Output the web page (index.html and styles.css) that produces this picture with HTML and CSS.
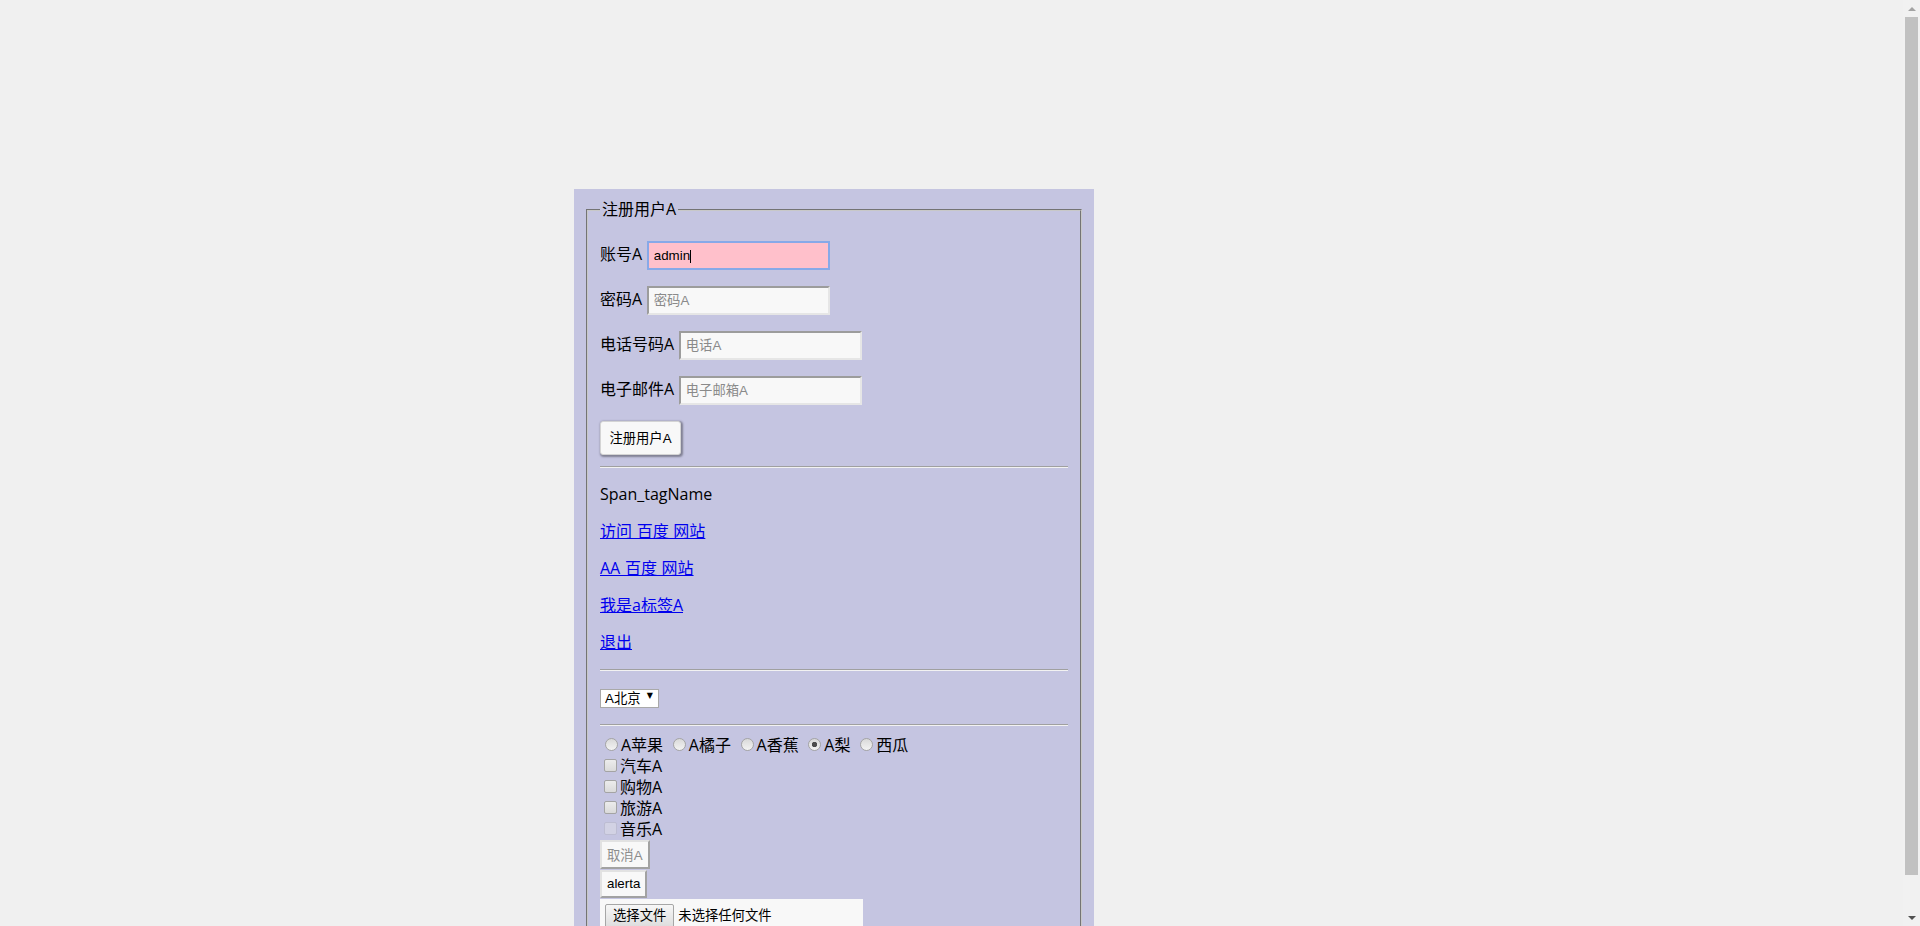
FILE: index.html
```html
<!DOCTYPE html>
<html lang="zh-CN">
<head>
<meta charset="utf-8">
<title>注册用户A</title>
<link rel="stylesheet" href="styles.css">
</head>
<body>
<div class="panel">
  <form class="reg-form" action="#" onsubmit="return false">
    <fieldset class="reg">
      <legend class="reg-title">注册用户A</legend>
      <p class="row">账号A <span class="field"><input class="txt txt-focus" type="text" value="admin"><i class="caret"></i></span></p>
      <p class="row">密码A <input class="txt" type="password" placeholder="密码A"></p>
      <p class="row">电话号码A <input class="txt" type="text" placeholder="电话A"></p>
      <p class="row">电子邮件A <input class="txt" type="text" placeholder="电子邮箱A"></p>
      <button class="btn-submit" type="button">注册用户A</button>
      <hr class="rule">
      <p class="line"><span>Span_tagName</span></p>
      <p class="line"><a class="link" href="#">访问 百度 网站</a></p>
      <p class="line"><a class="link" href="#">AA 百度 网站</a></p>
      <p class="line"><a class="link" href="#">我是a标签A</a></p>
      <p class="line"><a class="link" href="#">退出</a></p>
      <hr class="rule">
      <p class="line"><span class="select-wrap"><select class="city"><option>A北京</option><option>A上海</option><option>A广州</option></select></span></p>
      <hr class="rule">
      <div class="radios"><input class="opt-radio" type="radio" name="fruit">A苹果 <input class="opt-radio" type="radio" name="fruit">A橘子 <input class="opt-radio" type="radio" name="fruit">A香蕉 <input class="opt-radio" type="radio" name="fruit" checked>A梨 <input class="opt-radio" type="radio" name="fruit">西瓜</div>
      <label class="chk-line"><input class="opt-check" type="checkbox">汽车A</label>
      <label class="chk-line"><input class="opt-check" type="checkbox">购物A</label>
      <label class="chk-line"><input class="opt-check" type="checkbox">旅游A</label>
      <label class="chk-line"><input class="opt-check" type="checkbox" disabled>音乐A</label>
      <button class="btn-plain btn-cancel" type="button" disabled>取消A</button>
      <button class="btn-plain btn-alert" type="button">alerta</button>
      <label class="file"><span class="file-btn">选择文件</span><span class="file-name">未选择任何文件</span><input class="file-input" type="file"></label>
    </fieldset>
  </form>
</div>
<div class="scrollbar" aria-hidden="true">
  <span class="sb-btn sb-up"></span>
  <span class="sb-track"><span class="sb-thumb"></span></span>
  <span class="sb-btn sb-down"></span>
</div>
</body>
</html>
```

FILE: styles.css
```css
html {
  background: #f0f0f0;
}

body {
  margin: 0;
  font-family: "Open Sans", "Noto Sans CJK SC", sans-serif;
  font-size: 16px;
  line-height: 21px;
  word-spacing: 0.5px;
  color: #000;
}

.panel {
  width: 500px;
  margin: 189px 0 8px 574px;
  padding: 10px;
  background: #c5c5e1;
}

.reg-form {
  margin: 0;
}

.reg {
  margin: 0 2px;
  padding: 4.6px 12px 10px;
  border: 2px groove #c8c8c8;
  min-width: 0;
}

.reg-title {
  padding: 0 2px;
  line-height: 21px;
}

.row {
  margin: 16px 0;
}

.field {
  position: relative;
  display: inline-block;
}

.txt {
  box-sizing: border-box;
  width: 183px;
  height: 29px;
  margin: 0;
  padding: 0 5px;
  border: 2px solid;
  border-color: #9c9c9c #e6e6e6 #e6e6e6 #9c9c9c;
  background: #f8f8f8;
  font: 13.33px "Liberation Sans", "Noto Sans CJK SC", sans-serif;
  word-spacing: 0;
  color: #000;
  outline: none;
  vertical-align: baseline;
}

.txt::placeholder {
  color: #8a8a8a;
}

.txt-focus {
  background: #ffc0cb;
  border-color: #87a9e8;
}

.caret {
  position: absolute;
  left: 43px;
  top: 9px;
  width: 1px;
  height: 13px;
  background: #000;
}

.btn-submit {
  display: block;
  box-sizing: border-box;
  width: 81px;
  height: 34px;
  margin: 0 0 11px;
  padding: 0;
  border: 1px solid #d4d4d4;
  border-radius: 3px;
  background: #f8f8f8;
  box-shadow: 1px 1px 2px 1px rgba(0, 0, 0, 0.35);
  font: 13.33px "Liberation Sans", "Noto Sans CJK SC", sans-serif;
  color: #000;
}

.rule {
  height: 0;
  margin: 8px 0;
  border: 0;
  border-top: 1px solid #a0a0a0;
  border-bottom: 1px solid #f2f2f2;
}

.line {
  margin: 16px 0;
}

.link {
  color: #0000ee;
  text-decoration: underline;
}

.select-wrap {
  position: relative;
  display: inline-block;
}

.city {
  -webkit-appearance: none;
  appearance: none;
  box-sizing: border-box;
  width: 59px;
  height: 19px;
  margin: 0;
  padding: 0 0 0 4px;
  border: 1px solid #a9a9a9;
  border-radius: 0;
  background: #fff;
  font: 13.33px "Liberation Sans", "Noto Sans CJK SC", sans-serif;
  color: #000;
}

.select-wrap::after {
  content: "▼";
  position: absolute;
  right: 6px;
  top: 5px;
  font: 8px/8px "DejaVu Sans", sans-serif;
  color: #000;
  pointer-events: none;
}

.radios {
  padding-top: 1px;
  line-height: 21px;
}

.opt-radio {
  -webkit-appearance: none;
  appearance: none;
  box-sizing: border-box;
  width: 13px;
  height: 13px;
  margin: 0 3px 0 5px;
  border: 1px solid #a4a4a4;
  border-radius: 50%;
  background: linear-gradient(#d9d9d9, #f3f3f3);
  vertical-align: baseline;
}

.opt-radio:checked {
  background: radial-gradient(circle, #4d4d4d 0 2.4px, transparent 3px), linear-gradient(#d9d9d9, #f3f3f3);
}

.chk-line {
  display: block;
}

.opt-check {
  -webkit-appearance: none;
  appearance: none;
  box-sizing: border-box;
  width: 13px;
  height: 13px;
  margin: 0 3px 0 4px;
  border: 1px solid #a4a4a4;
  border-radius: 2px;
  background: linear-gradient(#ececec, #dadada);
  vertical-align: 0;
}

.opt-check:disabled {
  border-color: #bdbdd2;
  background: #d2d2e4;
}

.btn-plain {
  display: block;
  box-sizing: border-box;
  height: 29px;
  margin: 0 0 1px;
  padding: 0 5px;
  border: 2px solid;
  border-color: #e2e2e2 #a2a2a2 #a2a2a2 #e2e2e2;
  border-radius: 0;
  background: #f8f8f8;
  font: 13.33px "Liberation Sans", "Noto Sans CJK SC", sans-serif;
  color: #000;
}

.btn-cancel {
  color: #8d8d8d;
}

.btn-alert {
  height: 28px;
}

.file {
  display: flex;
  align-items: center;
  gap: 4px;
  box-sizing: border-box;
  width: 263px;
  height: 34px;
  padding: 0 5px;
  background: #f8f8f8;
  font: 13.33px "Liberation Sans", "Noto Sans CJK SC", sans-serif;
  line-height: 16px;
  word-spacing: 0;
}

.file-btn {
  display: flex;
  align-items: center;
  box-sizing: border-box;
  height: 24px;
  padding: 0 7px;
  border: 1px solid #a6a6a6;
  border-radius: 2px;
  background: linear-gradient(#f7f7f7, #dddddd);
}

.file-input {
  display: none;
}

/* classic browser scrollbar drawn over the right edge of the window */
.scrollbar {
  position: fixed;
  top: 0;
  right: 0;
  display: flex;
  flex-direction: column;
  width: 17px;
  height: 100vh;
  background: #f1f1f1;
}

.sb-btn {
  display: flex;
  align-items: center;
  justify-content: center;
  flex: 0 0 17px;
}

.sb-up::before {
  content: "";
  width: 0;
  height: 0;
  border-left: 4px solid transparent;
  border-right: 4px solid transparent;
  border-bottom: 4px solid #a3a3a3;
}

.sb-down::before {
  content: "";
  width: 0;
  height: 0;
  border-left: 4px solid transparent;
  border-right: 4px solid transparent;
  border-top: 4px solid #505050;
}

.sb-track {
  flex: 1;
  padding: 0 2px;
}

.sb-thumb {
  display: block;
  height: 858px;
  background: #c1c1c1;
}
```
